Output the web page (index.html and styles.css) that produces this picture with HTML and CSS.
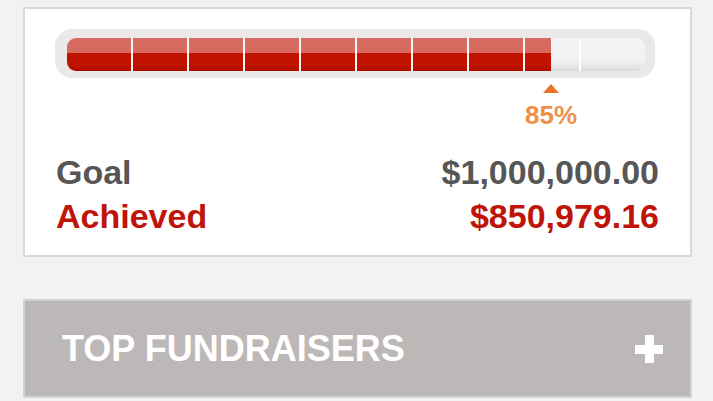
FILE: index.html
```html
<!DOCTYPE html>
<html lang="en">
<head>
<meta charset="utf-8">
<title>Fundraising progress</title>
<link rel="stylesheet" href="styles.css">
</head>
<body>
  <section class="card">
    <div class="track">
      <div class="bar" style="--fill: 484px"></div>
    </div>
    <div class="marker-row">
      <div class="marker" style="margin-left: 484px">
        <span class="arrow"></span>
        <span class="pct">85%</span>
      </div>
    </div>
    <dl class="totals">
      <div class="row goal"><dt>Goal</dt><dd>$1,000,000.00</dd></div>
      <div class="row achieved"><dt>Achieved</dt><dd>$850,979.16</dd></div>
    </dl>
  </section>
  <section class="panel">
    <h2 class="panel-title">TOP FUNDRAISERS</h2>
    <span class="plus" aria-hidden="true"></span>
  </section>
</body>
</html>
```
FILE: styles.css
```css
html, body {
  margin: 0;
  padding: 0;
}
body {
  background: #f2f2f2;
  font-family: "Liberation Sans", Arial, Helvetica, sans-serif;
  width: 713px;
  height: 401px;
  overflow: hidden;
}
.card {
  margin: 7px 0 0 23px;
  width: 669px;
  box-sizing: border-box;
  background: #fff;
  border: 2px solid #d9d9d9;
  padding: 20px 31px 17px 30px;
}
.track {
  width: 600px;
  height: 49px;
  box-sizing: border-box;
  background: #ebe9e7;
  border-radius: 17px;
  padding: 9px 10px 7px 12px;
}
.bar {
  height: 33px;
  border-radius: 9px;
  background:
    repeating-linear-gradient(to right, rgba(255,255,255,0.95) 0 2px, transparent 2px 56px) 64px 0 / 450px 100% no-repeat,
    linear-gradient(to bottom, #d86b61 0, #d66a5f 15px, #c21300 15px, #bf1100 28px, #a90d00 33px) 0 0 / var(--fill) 100% no-repeat,
    linear-gradient(to bottom, #f5f5f5 0, #f1f1f1 22px, #e6e6e6 29px, #d9d9d9 33px);
}
.marker-row {
  margin-left: 12px;
  width: 578px;
  padding-top: 6px;
}
.marker {
  width: 0;
  display: flex;
  flex-direction: column;
  align-items: center;
}
.arrow {
  width: 0;
  height: 0;
  border-left: 8.5px solid transparent;
  border-right: 8.5px solid transparent;
  border-bottom: 9px solid #ea7427;
}
.pct {
  margin-top: 9px;
  font-size: 26px;
  line-height: 26px;
  font-weight: bold;
  color: #ef8f4b;
  white-space: nowrap;
}
.totals {
  margin: 22px 0 0 1px;
}
.row {
  display: flex;
  justify-content: space-between;
  font-size: 34px;
  line-height: 44px;
  font-weight: bold;
}
.row dt, .row dd {
  margin: 0;
}
.goal {
  color: #565656;
}
.achieved {
  color: #bf1409;
}
.panel {
  margin: 42px 0 0 23px;
  width: 669px;
  height: 99px;
  box-sizing: border-box;
  border: 2px solid #d3d1d1;
  background: #bcb8b8;
  display: flex;
  align-items: center;
  justify-content: space-between;
  padding: 0 27px 0 37px;
}
.panel-title {
  margin: 0;
  font-size: 36px;
  font-weight: bold;
  color: #fff;
}
.plus {
  width: 28px;
  height: 28px;
  margin-top: 1px;
  background:
    linear-gradient(#fff, #fff) center / 9px 28px no-repeat,
    linear-gradient(#fff, #fff) center / 28px 9px no-repeat;
}
```
